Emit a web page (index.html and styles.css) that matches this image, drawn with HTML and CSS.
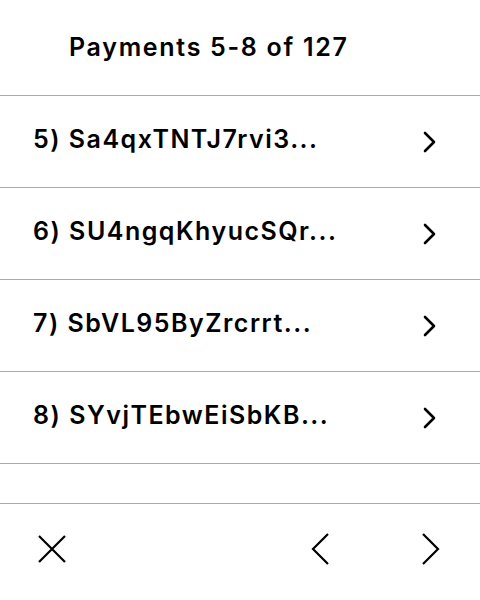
FILE: index.html
```html
<!DOCTYPE html>
<html>
<head>
<meta charset="utf-8">
<link rel="stylesheet" href="styles.css">
</head>
<body>
<div class="screen">
  <header class="header"><h1 class="title">Payments 5-8 of 127</h1></header>
  <ul class="list">
    <li class="row"><span class="label">5) Sa4qxTNTJ7rvi3...</span><svg class="chev" width="14" height="22" viewBox="0 0 14 22"><path d="M2 2 L11 11 L2 20" fill="none" stroke="#000" stroke-width="2.6" stroke-linecap="round" stroke-linejoin="round"/></svg></li>
    <li class="row"><span class="label">6) SU4ngqKhyucSQr...</span><svg class="chev" width="14" height="22" viewBox="0 0 14 22"><path d="M2 2 L11 11 L2 20" fill="none" stroke="#000" stroke-width="2.6" stroke-linecap="round" stroke-linejoin="round"/></svg></li>
    <li class="row"><span class="label">7) SbVL95ByZrcrrt...</span><svg class="chev" width="14" height="22" viewBox="0 0 14 22"><path d="M2 2 L11 11 L2 20" fill="none" stroke="#000" stroke-width="2.6" stroke-linecap="round" stroke-linejoin="round"/></svg></li>
    <li class="row"><span class="label">8) SYvjTEbwEiSbKB...</span><svg class="chev" width="14" height="22" viewBox="0 0 14 22"><path d="M2 2 L11 11 L2 20" fill="none" stroke="#000" stroke-width="2.6" stroke-linecap="round" stroke-linejoin="round"/></svg></li>
  </ul>
  <div class="spacer"></div>
  <footer class="footer">
    <svg class="icon close" width="30" height="30" viewBox="0 0 30 30"><path d="M2 2 L28 28 M28 2 L2 28" fill="none" stroke="#000" stroke-width="2.2"/></svg>
    <div class="nav">
      <svg class="icon" width="20" height="32" viewBox="0 0 20 32"><path d="M17 1 L2 16 L17 31" fill="none" stroke="#000" stroke-width="2.2"/></svg>
      <svg class="icon" width="20" height="32" viewBox="0 0 20 32"><path d="M3 1 L18 16 L3 31" fill="none" stroke="#000" stroke-width="2.2"/></svg>
    </div>
  </footer>
</div>
</body>
</html>
```
FILE: styles.css
```css
* { box-sizing: border-box; }
html, body { margin: 0; padding: 0; background: #fff; }
body { font-family: Inter, "Noto Sans", sans-serif; color: #000; }
.screen { width: 480px; height: 600px; display: flex; flex-direction: column; }
.header { height: 96px; border-bottom: 1px solid #aaa; display: flex; align-items: center; padding-left: 69px; padding-bottom: 2px; }
.title { margin: 0; font-size: 25px; font-weight: 600; letter-spacing: 1.7px; }
.list { list-style: none; margin: 0; padding: 0; }
.row { height: 92px; border-bottom: 1px solid #aaa; display: flex; align-items: center; justify-content: space-between; padding: 0 43px 5px 33px; }
.label { font-size: 25px; font-weight: 600; letter-spacing: 1.5px; }
.chev { display: block; margin-top: 5px; }
.spacer { height: 40px; border-bottom: 1px solid #aaa; }
.footer { flex: 1; display: flex; align-items: center; justify-content: space-between; padding: 0 40px 6px 37px; }
.nav { display: flex; gap: 89px; }
.icon { display: block; }
```
